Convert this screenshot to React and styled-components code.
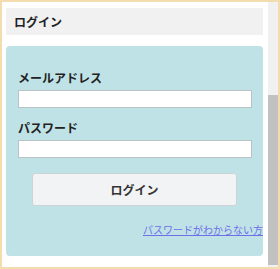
import styled, { createGlobalStyle } from "styled-components";

const GlobalStyle = createGlobalStyle`
  html, body {
    margin: 0;
    padding: 0;
    background: #ffffff;
  }
  body {
    font-family: "Noto Sans CJK JP", "Noto Sans", sans-serif;
    color: #222222;
  }
`;

const Frame = styled.div`
  width: 280px;
  height: 269px;
  box-sizing: border-box;
  border: 2px solid #f3dcae;
  display: flex;
  background: #ffffff;
  overflow: hidden;
`;

const Content = styled.div`
  flex: 1;
  min-width: 0;
  padding: 6px 5px 0 4px;
  display: flex;
  flex-direction: column;
  gap: 11px;
`;

// drawn scrollbar, scrolled to the bottom
const ScrollTrack = styled.div`
  width: 10px;
  flex-shrink: 0;
  background: #f1f1f1;
  display: flex;
  flex-direction: column;
  padding: 93px 0 2px;
  box-sizing: border-box;
`;

const ScrollThumb = styled.div`
  flex: 1;
  background: #c1c1c1;
`;

const SectionTitle = styled.h2`
  margin: 0;
  height: 27px;
  padding: 0 8px;
  display: flex;
  align-items: center;
  background: #f1f1f1;
  font-size: 12px;
  font-weight: 700;
  color: #222222;
`;

const LoginBox = styled.form`
  background: #bfe2e6;
  border-radius: 4px;
  padding: 24px 0 19px 12px;
  display: flex;
  flex-direction: column;
`;

const Label = styled.label`
  font-size: 12px;
  font-weight: 700;
  line-height: 16px;
  color: #222222;
  margin-bottom: 4px;
  margin-top: ${(p) => (p.$first ? "0" : "12px")};
`;

const Field = styled.input`
  width: 234px;
  height: 18px;
  box-sizing: border-box;
  border: 1px solid #b9c2c4;
  background: #ffffff;
  margin: 0;
  padding: 0 4px;
`;

const SubmitButton = styled.button`
  align-self: center;
  width: 205px;
  height: 33px;
  margin: 15px 12px 0 0;
  background: #f2f3f5;
  border: 1px solid #cfd3d6;
  border-radius: 3px;
  font-family: inherit;
  font-size: 12px;
  font-weight: 700;
  color: #333333;
  cursor: pointer;
`;

const ForgotRow = styled.div`
  margin-top: 14px;
  text-align: right;
  line-height: 14px;
  white-space: nowrap;
`;

const ForgotLink = styled.a`
  font-size: 10px;
  color: #6f6fe8;
  text-decoration: underline;
`;

const App = () => {
  return (
    <>
      <GlobalStyle />
      <Frame>
        <Content>
          <SectionTitle>ログイン</SectionTitle>
          <LoginBox onSubmit={(e) => e.preventDefault()}>
            <Label $first htmlFor="email">
              メールアドレス
            </Label>
            <Field id="email" type="email" />
            <Label htmlFor="password">パスワード</Label>
            <Field id="password" type="password" />
            <SubmitButton type="submit">ログイン</SubmitButton>
            <ForgotRow>
              <ForgotLink href="#">パスワードがわからない方</ForgotLink>
            </ForgotRow>
          </LoginBox>
        </Content>
        <ScrollTrack>
          <ScrollThumb />
        </ScrollTrack>
      </Frame>
    </>
  );
};

export default App;
